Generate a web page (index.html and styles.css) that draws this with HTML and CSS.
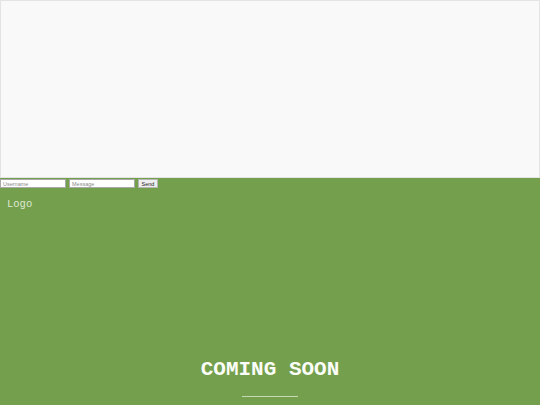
FILE: index.html
```html
<!DOCTYPE html>
<html>
<head>
<meta charset="utf-8">
<link rel="stylesheet" href="styles.css">
</head>
<body>
<div class="frame"></div>
<div class="main">
  <form class="chat">
    <input class="field" type="text" placeholder="Username">
    <input class="field" type="text" placeholder="Message">
    <button class="send" type="button">Send</button>
  </form>
  <div class="logo">Logo</div>
  <div class="hero">
    <h1 class="title">COMING SOON</h1>
    <div class="rule"></div>
  </div>
</div>
</body>
</html>
```
FILE: styles.css
```css
html, body {
  margin: 0;
  padding: 0;
  height: 100%;
}
body {
  display: flex;
  flex-direction: column;
  font-family: "Liberation Sans", Arial, sans-serif;
  background: #74a04d;
}
.frame {
  height: 178px;
  box-sizing: border-box;
  border: 1px solid #e4e4e4;
  background: #f9f9f9;
  flex: none;
}
.main {
  flex: 1;
  display: flex;
  flex-direction: column;
  background: #74a04d;
}
.chat {
  display: flex;
  gap: 3px;
  margin: 1px 0 0 0;
  height: 9px;
}
.field {
  width: 66px;
  height: 9px;
  box-sizing: border-box;
  border: 1px solid #a9a9a9;
  padding: 0 2px;
  margin: 0;
  font-family: "Liberation Sans", Arial, sans-serif;
  font-size: 5.5px;
  background: #fff;
  outline: none;
}
.field::placeholder {
  color: #8a8a8a;
}
.send {
  width: 20px;
  height: 9px;
  box-sizing: border-box;
  margin: 0;
  padding: 0;
  border: 1px solid #b5b5b5;
  background: #efefef;
  font-family: "Liberation Sans", Arial, sans-serif;
  font-size: 5.5px;
  color: #222;
}
.logo {
  margin: 10px 0 0 7px;
  font-family: "Liberation Mono", "Courier New", monospace;
  font-size: 10.5px;
  line-height: 12px;
  color: #dde7d2;
}
.hero {
  margin-top: auto;
  display: flex;
  flex-direction: column;
  align-items: center;
  padding-bottom: 8px;
}
.title {
  margin: 0;
  font-family: "Liberation Mono", "Courier New", monospace;
  font-weight: bold;
  font-size: 21px;
  line-height: 24px;
  color: #fbfdf8;
}
.rule {
  width: 56px;
  height: 1px;
  margin-top: 14px;
  background: #c6d8b5;
}
```
